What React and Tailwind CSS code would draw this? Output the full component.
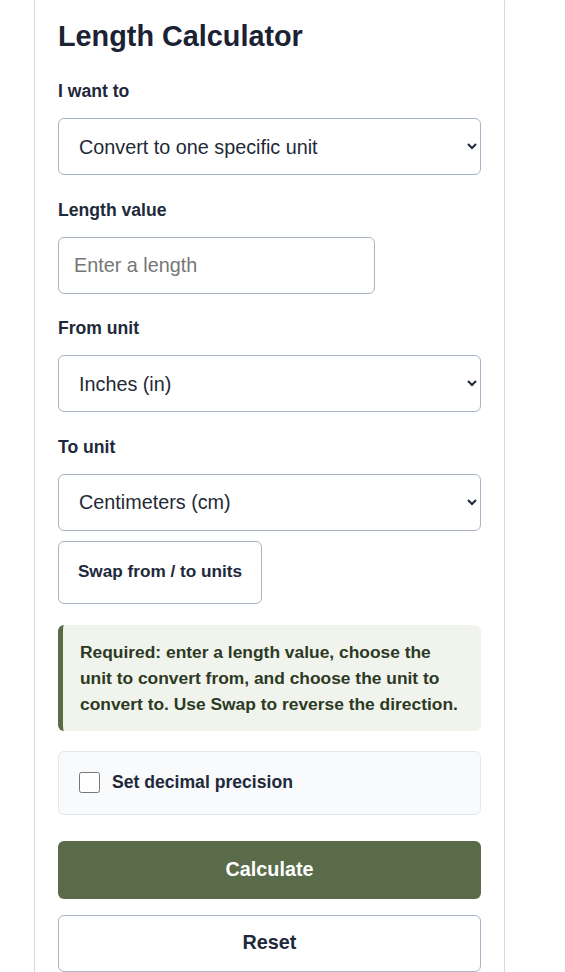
import { useState } from 'react'

const units = [
  'Millimeters (mm)',
  'Centimeters (cm)',
  'Meters (m)',
  'Kilometers (km)',
  'Inches (in)',
  'Feet (ft)',
  'Yards (yd)',
  'Miles (mi)',
]

const fieldClass =
  'w-full h-[57px] rounded-md border border-[#a9b4c6] bg-white px-[16px] text-[19.8px] text-[#1f2937] outline-none'

function Field({ label, children }) {
  return (
    <div className="flex flex-col">
      <label className="mb-[14px] text-[17.6px] font-bold leading-[26px] text-[#1e293b]">{label}</label>
      {children}
    </div>
  )
}

export default function App() {
  const [mode, setMode] = useState('one')
  const [value, setValue] = useState('')
  const [from, setFrom] = useState('Inches (in)')
  const [to, setTo] = useState('Centimeters (cm)')
  const [precision, setPrecision] = useState(false)

  const swap = () => {
    setFrom(to)
    setTo(from)
  }

  const reset = () => {
    setMode('one')
    setValue('')
    setFrom('Inches (in)')
    setTo('Centimeters (cm)')
    setPrecision(false)
  }

  return (
    <div className="min-h-screen bg-white font-['Liberation_Sans',Arial,sans-serif]">
      <div className="ml-[34px] -mt-[8px] w-[471px] rounded-[10px] border border-[#d5dae1] bg-white px-[23px] pt-[26px] pb-6">
        <h1 className="text-[28.8px] font-bold leading-[35px] text-[#1a2233]">Length Calculator</h1>

        <div className="mt-[24px] flex flex-col gap-[21.5px]">
          <Field label="I want to">
            <select value={mode} onChange={(e) => setMode(e.target.value)} className={fieldClass}>
              <option value="one">Convert to one specific unit</option>
              <option value="all">Convert to all units</option>
            </select>
          </Field>

          <Field label="Length value">
            <input
              type="text"
              value={value}
              onChange={(e) => setValue(e.target.value)}
              placeholder="Enter a length"
              className="h-[57px] w-[317px] rounded-md border border-[#a9b4c6] bg-white px-[15px] text-[19.8px] text-[#1f2937] outline-none placeholder:text-[#767676]"
            />
          </Field>

          <Field label="From unit">
            <select value={from} onChange={(e) => setFrom(e.target.value)} className={fieldClass}>
              {units.map((u) => (
                <option key={u}>{u}</option>
              ))}
            </select>
          </Field>

          <Field label="To unit">
            <select value={to} onChange={(e) => setTo(e.target.value)} className={fieldClass}>
              {units.map((u) => (
                <option key={u}>{u}</option>
              ))}
            </select>
          </Field>
        </div>

        <button
          type="button"
          onClick={swap}
          className="mt-[10px] h-[63px] w-[204px] rounded-md border border-[#a9b4c6] bg-white text-[17.2px] font-bold text-[#1e293b]"
        >
          Swap from / to units
        </button>

        <div className="mt-[21px] rounded-md border-l-[5px] border-[#5a6b4a] bg-[#f1f4ec] py-[14px] pr-4 pl-[17px]">
          <p className="text-[17.4px] font-bold leading-[26px] text-[#2c3a25]">
            Required: enter a length value, choose the unit to convert from, and choose the unit to convert to. Use Swap to
            reverse the direction.
          </p>
        </div>

        <div className="mt-[20px] flex h-[64px] items-center gap-[12px] rounded-md border border-[#e2e8f0] bg-[#f8fafc] px-[20px]">
          <input
            type="checkbox"
            checked={precision}
            onChange={(e) => setPrecision(e.target.checked)}
            className="h-[21px] w-[21px] accent-[#5a6b4a]"
          />
          <span className="text-[17.6px] font-bold text-[#1e293b]">Set decimal precision</span>
        </div>

        <div className="mt-[26px] flex flex-col gap-[16px]">
          <button
            type="button"
            className="h-[58px] w-full rounded-md bg-[#5a6b4a] text-[19.8px] font-bold text-white"
          >
            Calculate
          </button>
          <button
            type="button"
            onClick={reset}
            className="h-[57px] w-full rounded-md border border-[#a9b4c6] bg-white text-[19.8px] font-bold text-[#1e293b]"
          >
            Reset
          </button>
        </div>
      </div>
    </div>
  )
}
